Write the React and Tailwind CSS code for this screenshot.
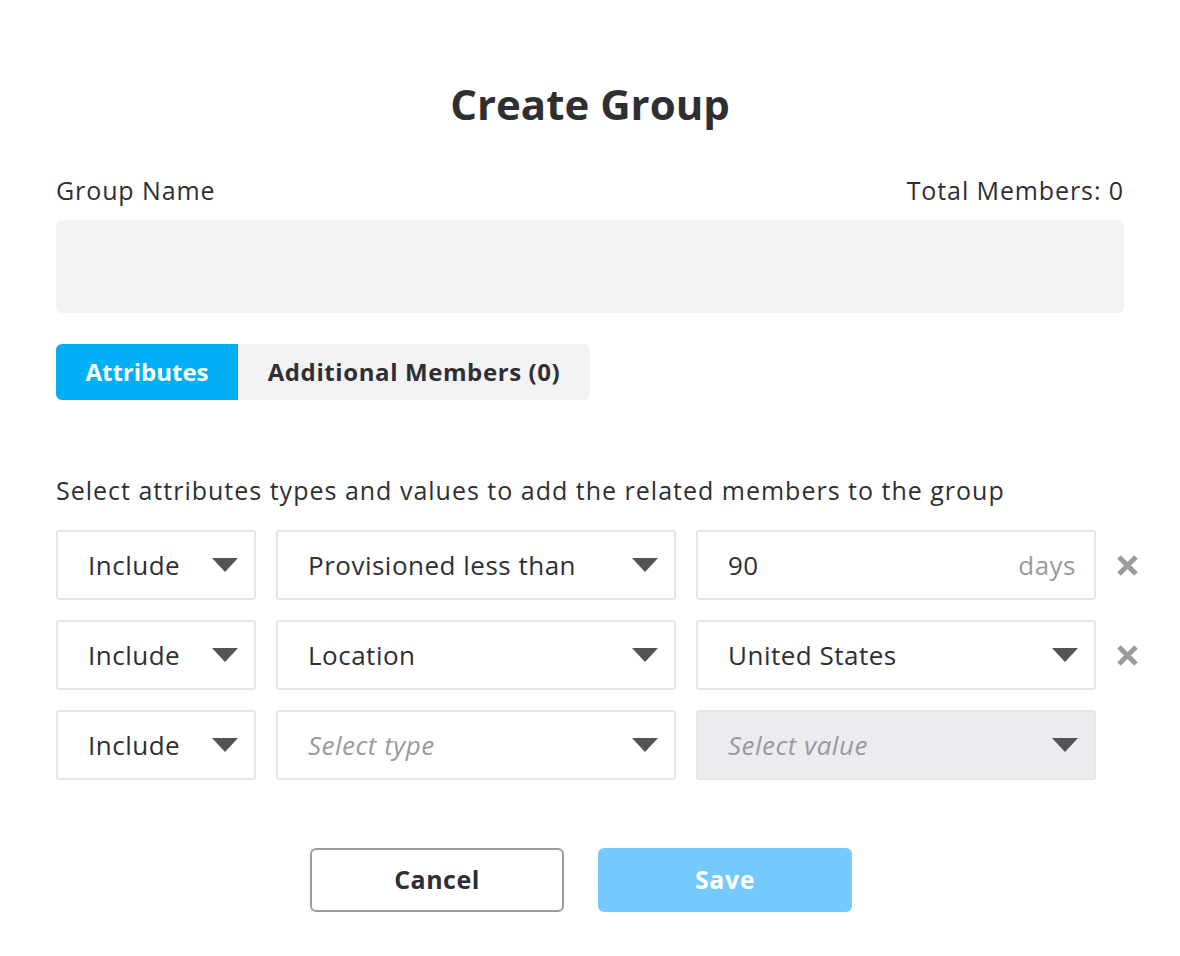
import React from "react";

const font = { fontFamily: '"Open Sans", "Lato", sans-serif' };

function Caret() {
  return (
    <svg width="26" height="14" viewBox="0 0 26 14" className="shrink-0">
      <polygon points="0,0 26,0 13,14" fill="#545457" />
    </svg>
  );
}

function XIcon() {
  return (
    <svg width="23" height="23" viewBox="0 0 23 23">
      <path d="M3 3 L20 20 M20 3 L3 20" stroke="#9b9b9f" strokeWidth="5" strokeLinecap="butt" />
    </svg>
  );
}

function Select({ text, placeholder, width, disabled }) {
  return (
    <div
      className={`h-[70px] ${width} shrink-0 flex items-center justify-between pl-[30px] pr-[16px] rounded-[3px] border-2 ${disabled ? "bg-[#ececf0] border-[#e6e6ea]" : "bg-white border-[#e6e6e8]"}`}
    >
      <span className={`text-[26px] tracking-[0.5px] ${placeholder ? "italic text-[#9a9a9e]" : "text-[#2f2f33]"}`}>
        {text}
      </span>
      <Caret />
    </div>
  );
}

function Row({ type, typePlaceholder, value, removable }) {
  return (
    <div className="flex items-center gap-[20px]">
      <Select text="Include" width="w-[200px]" />
      <Select text={type} placeholder={typePlaceholder} width="w-[400px]" />
      {value}
      {removable ? (
        <div className="shrink-0 flex"><XIcon /></div>
      ) : null}
    </div>
  );
}

export default function App() {
  return (
    <div className="w-[1180px] h-[956px] bg-white px-[56px] pt-[80px]" style={font}>
      <h1 className="text-center text-[42px] font-bold text-[#2f2f33] leading-[48px]">Create Group</h1>
      <div className="mt-[48px] flex justify-between text-[25px] tracking-[0.9px] text-[#2f2f33] leading-[28px]">
        <span>Group Name</span>
        <span>Total Members: 0</span>
      </div>
      <div className="mt-[16px] h-[93px] rounded-[6px] bg-[#f3f3f5]" />
      <div className="mt-[31px] flex w-[534px] h-[56px] rounded-[6px] bg-[#f3f3f5] overflow-hidden text-[24px] font-bold">
        <div className="w-[182px] bg-[#00aff5] text-white flex items-center justify-center">Attributes</div>
        <div className="flex-1 text-[#2f2f33] tracking-[0.6px] flex items-center justify-center">Additional Members (0)</div>
      </div>
      <p className="mt-[76px] text-[25px] tracking-[1px] text-[#2f2f33] leading-[28px]">
        Select attributes types and values to add the related members to the group
      </p>
      <div className="mt-[26px] flex flex-col gap-[20px]">
        <Row
          type="Provisioned less than"
          removable
          value={
            <div className="h-[70px] w-[400px] shrink-0 flex items-center justify-between pl-[30px] pr-[18px] rounded-[3px] border-2 border-[#e6e6e8] bg-white">
              <span className="text-[26px] tracking-[0.5px] text-[#2f2f33]">90</span>
              <span className="text-[26px] tracking-[0.5px] text-[#9a9a9e]">days</span>
            </div>
          }
        />
        <Row type="Location" removable value={<Select text="United States" width="w-[400px]" />} />
        <Row
          type="Select type"
          typePlaceholder
          value={<Select text="Select value" placeholder disabled width="w-[400px]" />}
        />
      </div>
      <div className="mt-[68px] flex justify-center gap-[34px] pr-[18px]">
        <button className="w-[254px] h-[64px] rounded-[6px] border-2 border-[#9b9b9f] bg-white text-[25px] tracking-[0.5px] font-bold text-[#2f2f33]">
          Cancel
        </button>
        <button className="w-[254px] h-[64px] rounded-[6px] bg-[#74c9fd] text-[25px] tracking-[0.5px] font-bold text-white">
          Save
        </button>
      </div>
    </div>
  );
}
